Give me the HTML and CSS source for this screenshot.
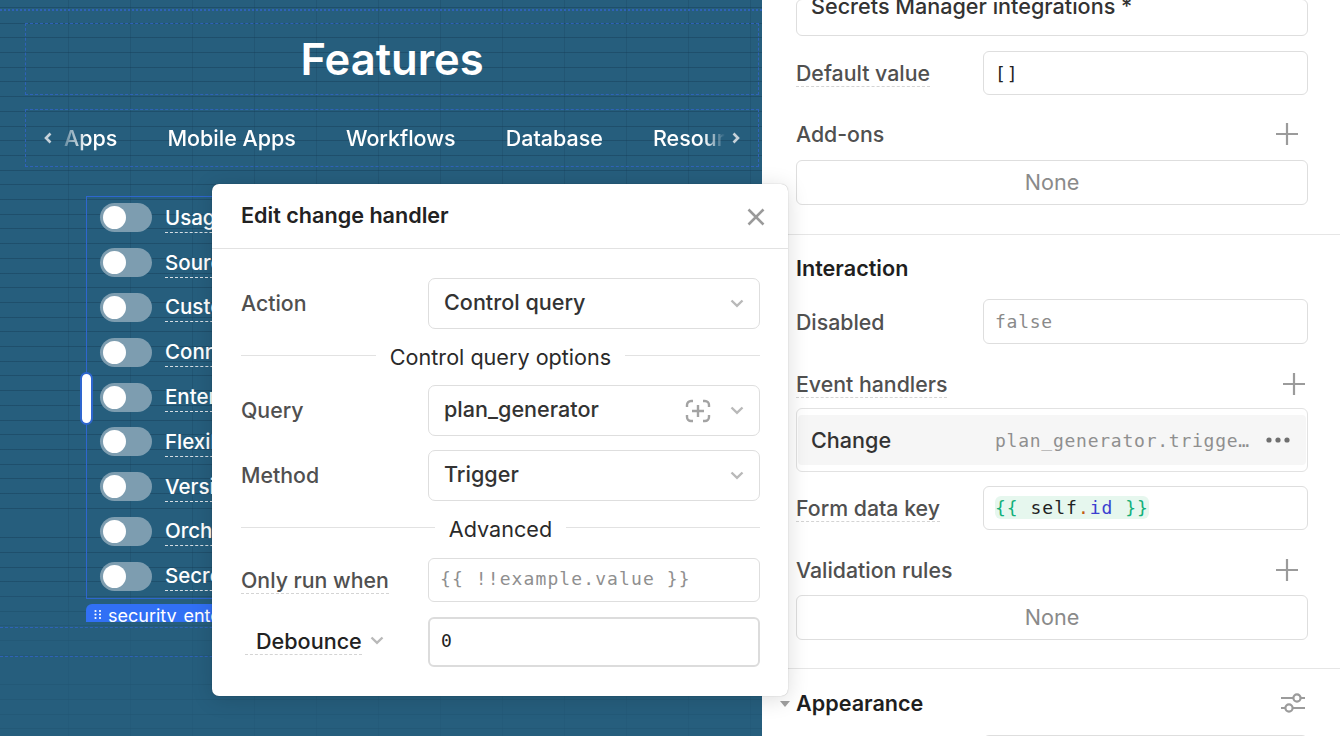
FILE: index.html
```html
<!DOCTYPE html>
<html lang="en">
<head>
<meta charset="utf-8">
<title>Edit change handler</title>
<link rel="stylesheet" href="styles.css">
</head>
<body>
<div class="app">
  <main class="canvas">
    <div class="grid-lines"></div>
    <div class="dash dash-top"></div>
    <div class="frame frame-title"><h1>Features</h1></div>
    <div class="frame frame-tabs">
      <svg class="chev" width="10" height="14" viewBox="0 0 10 14"><path d="M7.500 2.500 3 7l4.500 4.500" fill="none" stroke="#c6d2da" stroke-width="2.600"/></svg>
      <div class="tabs">
        <span>Apps</span><span>Mobile Apps</span><span>Workflows</span><span>Database</span><span>Resources</span>
      </div>
      <svg class="chev" width="10" height="14" viewBox="0 0 10 14"><path d="M2.500 2.500 7 7l-4.500 4.500" fill="none" stroke="#c6d2da" stroke-width="2.600"/></svg>
    </div>
    <div class="selection">
      <div class="toggle-row"><span class="toggle"></span><span class="tlabel">Usage analytics</span></div>
      <div class="toggle-row"><span class="toggle"></span><span class="tlabel">Source control</span></div>
      <div class="toggle-row"><span class="toggle"></span><span class="tlabel">Custom branding</span></div>
      <div class="toggle-row"><span class="toggle"></span><span class="tlabel">Connectors</span></div>
      <div class="toggle-row"><span class="toggle"></span><span class="tlabel">Enterprise support</span></div>
      <div class="toggle-row"><span class="toggle"></span><span class="tlabel">Flexible hosting</span></div>
      <div class="toggle-row"><span class="toggle"></span><span class="tlabel">Version history</span></div>
      <div class="toggle-row"><span class="toggle"></span><span class="tlabel">Orchestration</span></div>
      <div class="toggle-row"><span class="toggle"></span><span class="tlabel">Secrets Manager</span></div>
    </div>
    <div class="resize-handle"></div>
    <div class="tag">
      <svg width="10" height="11" viewBox="0 0 10 11" fill="#fff"><circle cx="2.500" cy="2" r="1.100"/><circle cx="7" cy="2" r="1.100"/><circle cx="2.500" cy="5.500" r="1.100"/><circle cx="7" cy="5.500" r="1.100"/><circle cx="2.500" cy="9" r="1.100"/><circle cx="7" cy="9" r="1.100"/></svg>
      <span>security_enterprise</span>
    </div>
    <div class="dash dash-b1"></div>
    <div class="dash dash-b2"></div>
  </main>

  <aside class="panel">
    <div class="section first">
      <div class="box box-clipped">Secrets Manager integrations *</div>
      <div class="row row-default"><span class="label dotted">Default value</span><div class="input mono dark">[]</div></div>
      <div class="row-head head-addons"><span class="label">Add-ons</span><svg class="plus" width="22" height="22" viewBox="0 0 22 22"><path d="M11 0v22M0 11h22" stroke="#9b9b9b" stroke-width="2.200"/></svg></div>
      <div class="box none">None</div>
    </div>
    <div class="section second">
      <h2>Interaction</h2>
      <div class="row row-disabled"><span class="label">Disabled</span><div class="input mono muted">false</div></div>
      <div class="row-head head-events"><span class="label dotted">Event handlers</span><svg class="plus plus-in" width="22" height="22" viewBox="0 0 22 22"><path d="M11 0v22M0 11h22" stroke="#9b9b9b" stroke-width="2.200"/></svg></div>
      <div class="handler">
        <div class="handler-inner">
          <span class="handler-name">Change</span>
          <span class="mono handler-code">plan_generator.trigge…</span>
          <svg width="24" height="6" viewBox="0 0 24 6" fill="#6f6f6f"><circle cx="3" cy="3" r="2.600"/><circle cx="12" cy="3" r="2.600"/><circle cx="21" cy="3" r="2.600"/></svg>
        </div>
      </div>
      <div class="row row-form"><span class="label dotted">Form data key</span><div class="input mono key-input"><span class="tpl"><i class="br">{{</i> self<i class="dot">.</i><i class="prop">id</i> <i class="br">}}</i></span></div></div>
      <div class="row-head head-valid"><span class="label">Validation rules</span><svg class="plus" width="22" height="22" viewBox="0 0 22 22"><path d="M11 0v22M0 11h22" stroke="#9b9b9b" stroke-width="2.200"/></svg></div>
      <div class="box none">None</div>
    </div>
    <div class="section third">
      <div class="appearance">
        <span class="tri"></span>
        <h2>Appearance</h2>
        <svg class="sliders" width="24" height="22" viewBox="0 0 24 22" fill="none" stroke="#9b9b9b" stroke-width="2.200"><path d="M0 6h12M20 6h4M0 16h4M12 16h12"/><circle cx="16" cy="6" r="3.600"/><circle cx="8" cy="16" r="3.600"/></svg>
      </div>
      <div class="row"><span></span><div class="input input-peek"></div></div>
    </div>
  </aside>

  <section class="modal">
    <header class="modal-head">
      <h3>Edit change handler</h3>
      <svg width="18" height="18" viewBox="0 0 18 18"><path d="M1.500 1.500l15 15M16.500 1.500l-15 15" stroke="#9a9a9a" stroke-width="2.600"/></svg>
    </header>
    <div class="modal-body">
      <div class="mrow r-action"><span class="label">Action</span>
        <div class="select"><span>Control query</span><svg class="caret" width="14" height="9" viewBox="0 0 14 9"><path d="M1.500 1.500 7 6.800l5.500-5.300" fill="none" stroke="#b9b9b9" stroke-width="2.400"/></svg></div>
      </div>
      <div class="divider d-options"><span>Control query options</span></div>
      <div class="mrow r-query"><span class="label">Query</span>
        <div class="select"><span>plan_generator</span>
          <svg class="fx" width="26" height="24" viewBox="0 0 26 24" fill="none" stroke="#a3a3a3" stroke-width="2.400"><path d="M2 8V6a4 4 0 0 1 4-4h2M18 2h2a4 4 0 0 1 4 4v2M24 16v2a4 4 0 0 1-4 4h-2M8 22H6a4 4 0 0 1-4-4v-2M13 6v12M7 12h12"/></svg>
          <svg class="caret" width="14" height="9" viewBox="0 0 14 9"><path d="M1.500 1.500 7 6.800l5.500-5.300" fill="none" stroke="#b9b9b9" stroke-width="2.400"/></svg></div>
      </div>
      <div class="mrow r-method"><span class="label">Method</span>
        <div class="select"><span>Trigger</span><svg class="caret" width="14" height="9" viewBox="0 0 14 9"><path d="M1.500 1.500 7 6.800l5.500-5.300" fill="none" stroke="#b9b9b9" stroke-width="2.400"/></svg></div>
      </div>
      <div class="divider d-advanced"><span>Advanced</span></div>
      <div class="mrow r-when"><span class="label dotted">Only run when</span>
        <div class="input mono placeholder">{{ !!example.value }}</div>
      </div>
      <div class="mrow r-debounce"><span class="debounce"><span>Debounce</span><svg width="14" height="9" viewBox="0 0 14 9"><path d="M1.500 1.500 7 6.800l5.500-5.300" fill="none" stroke="#b9b9b9" stroke-width="2.400"/></svg></span>
        <div class="input mono dark focus">0</div>
      </div>
    </div>
  </section>
</div>
</body>
</html>
```

FILE: styles.css
```css
* { box-sizing: border-box; }
html, body { margin: 0; height: 100%; overflow: hidden; }
body { font-family: Inter, "Liberation Sans", sans-serif; color: #1f1f1f; background: #fff; }
h1, h2, h3 { margin: 0; }
i { font-style: normal; }

.app { position: relative; display: flex; width: 1340px; height: 736px; overflow: hidden; }

/* canvas */
.canvas { position: relative; flex: 0 0 762px; height: 736px; background: #265e7d; overflow: hidden; }
.grid-lines {
  position: absolute; inset: 0;
  background-image:
    repeating-linear-gradient(180deg, transparent 0, transparent 13.7px, rgba(20,55,80,.38) 13.7px, rgba(20,55,80,.38) 14.7px),
    repeating-linear-gradient(90deg, transparent 0, transparent 61px, rgba(20,55,80,.2) 61px, rgba(20,55,80,.2) 62px);
  background-position: 0 9px, 7px 0;
  -webkit-mask-image: linear-gradient(180deg, #000 0, #000 78%, rgba(0,0,0,.3) 86%, rgba(0,0,0,.3) 100%);
}
.dash { position: absolute; left: 0; right: 0; border-top: 1px dashed #2f62b8; }
.dash-top { top: 9px; border-top-style: dotted; border-top-width: 2px; }
.dash-b1 { top: 627px; }
.dash-b2 { top: 656px; }
.frame { position: absolute; left: 25px; width: 734px; border: 1px dashed #2f62b8; }
.frame-title { top: 23px; height: 72px; display: flex; align-items: center; justify-content: center; }
.frame-title h1 { color: #fff; font-size: 43.500px; font-weight: 600; line-height: 1; padding-top: 2px; }
.frame-tabs { top: 109px; height: 58px; display: flex; align-items: center; padding-left: 17px; color: #fff; }
.chev { flex: none; }
.tabs {
  display: flex; gap: 50px; flex: 0 0 661px; margin: 0 6px 0 11px; overflow: hidden; white-space: nowrap;
  font-size: 21.500px; font-weight: 500; line-height: 1.200; padding-top: 2px;
  -webkit-mask-image: linear-gradient(90deg, rgba(255,255,255,.3) 0, #fff 24px, #fff 640px, rgba(255,255,255,0) 661px);
}
.selection { position: absolute; left: 86px; top: 196px; width: 300px; height: 403px; border: 1px solid #2e66cf; padding-left: 13px; display: flex; flex-direction: column; }
.toggle-row { flex: 0 0 44.800px; display: flex; align-items: center; gap: 13px; padding-bottom: 3px; }
.toggle { position: relative; flex: 0 0 52px; height: 29px; border-radius: 15px; background: #7d9db0; }
.toggle::after { content: ""; position: absolute; left: 3px; top: 3px; width: 23px; height: 23px; border-radius: 50%; background: #fff; }
.tlabel { color: #fff; font-size: 20.500px; font-weight: 500; white-space: nowrap; border-bottom: 1px dashed #d5dde3; line-height: 26px; padding: 2px 0 1px; }
.resize-handle { position: absolute; left: 80px; top: 372px; width: 13px; height: 53px; border-radius: 7px; background: #fff; border: 2px solid #2e66cf; }
.tag { position: absolute; left: 86px; top: 604px; width: 200px; height: 18px; background: #3170f5; border-radius: 6px 6px 0 0; color: #fff; font-size: 18px; line-height: 23px; padding-left: 7px; display: flex; gap: 5px; overflow: hidden; white-space: nowrap; }
.tag svg { flex: none; margin-top: 5px; }

/* panel */
.panel { flex: 1; padding-left: 34px; padding-right: 32px; background: #fff; }
.section { position: relative; }
.section::after { content: ""; position: absolute; left: -34px; right: -32px; bottom: 0; border-bottom: 1px solid #e6e6e6; }
.third::after { display: none; }
.first { height: 236px; }
.second { height: 434px; }
.label { font-size: 21.300px; line-height: 26px; color: #505050; font-weight: 500; white-space: nowrap; }
.dotted { display: inline-block; justify-self: start; border-bottom: 1px dashed #d4d4d4; }
.panel .dotted { padding-top: 1px; }
.mrow .label { padding-bottom: 1px; }
.mrow .dotted { padding-bottom: 0; }
.box { border: 1px solid #dedede; border-radius: 6px; font-size: 21.600px; font-weight: 500; }
.box-clipped { height: 37px; margin-top: -1px; padding: 0 14px; line-height: 13px; color: #333; overflow: hidden; }
.none { height: 45px; display: flex; align-items: center; justify-content: center; color: #8a8a8a; font-weight: 400; padding-bottom: 2px; }
.row { display: grid; grid-template-columns: 187px 1fr; align-items: center; }
.row-head { display: flex; justify-content: space-between; align-items: center; }
.plus { margin-right: 10px; }
.plus-in { margin-right: 3px; }
.input { display: flex; align-items: center; height: 44px; border: 1px solid #dedede; border-radius: 6px; padding: 0 11px; background: #fff; }
.key-input { padding-bottom: 2px; }
.mono { font-family: "DejaVu Sans Mono", "Liberation Mono", monospace; font-size: 18px; letter-spacing: 1px; }
.dark { color: #222; }
.muted { color: #8a8a8a; }
.row-default { margin-top: 15px; }
.head-addons { margin-top: 26px; height: 26px; }
.head-addons + .none { margin-top: 13px; }
.second h2, .appearance h2 { font-size: 21.600px; font-weight: 600; line-height: 26px; color: #1f1f1f; }
.second h2 { padding-top: 20px; box-sizing: content-box; }
.row-disabled { margin-top: 18px; height: 45px; }
.row-disabled .input { height: 45px; letter-spacing: .75px; }
.head-events { margin-top: 27px; height: 26px; }
.handler { margin-top: 11px; height: 64px; border: 1px solid #e2e2e2; border-radius: 6px; }
.handler-inner { display: flex; align-items: center; margin: 6px 1px; height: 50px; background: #f6f6f6; border-radius: 4px; padding: 0 16px 0 13px; }
.handler-name { font-size: 21.600px; font-weight: 500; color: #333; flex: 0 0 184px; }
.handler-code { color: #8f8f8f; flex: 1; white-space: nowrap; letter-spacing: .75px; }
.row-form { margin-top: 14px; }
.tpl { background: #e6f7ee; border-radius: 6px; color: #222; padding: 1px 0; }
.br { color: #12b07a; }
.dot { color: #c25a12; }
.prop { color: #3b3fd0; }
.head-valid { margin-top: 27px; height: 26px; }
.head-valid + .none { margin-top: 12px; }
.third { padding-top: 21px; }
.appearance { position: relative; display: flex; justify-content: space-between; align-items: center; height: 26px; }
.tri { position: absolute; left: -16px; top: 11px; border-style: solid; border-width: 6px 5px 0; border-color: #a0a0a0 transparent transparent; }
.sliders { margin-right: 3px; }
.third .row { margin-top: 19px; }

/* modal */
.modal { position: absolute; left: 212px; top: 184px; width: 576px; height: 512px; background: #fff; border-radius: 7px; box-shadow: 0 0 1px rgba(0,0,0,.35), 0 3px 22px rgba(0,0,0,.14); }
.modal-head { display: flex; align-items: center; justify-content: space-between; height: 65px; padding: 0 23px 0 29px; border-bottom: 1px solid #e2e2e2; }
.modal-head h3 { font-size: 21.600px; font-weight: 600; color: #222; padding-bottom: 3px; }
.modal-head svg { margin-top: 2px; }
.modal-body { padding: 29px 28px 0 29px; }
.mrow { display: grid; grid-template-columns: 187px 1fr; align-items: center; }
.select { display: flex; align-items: center; height: 51px; border: 1px solid #dedede; border-radius: 7px; padding: 0 15px; font-size: 21.600px; font-weight: 500; color: #333; }
.select span { flex: 1; padding-bottom: 3px; }
.caret { flex: none; }
.fx { flex: none; margin-right: 19px; }
.divider { position: relative; display: flex; align-items: center; justify-content: center; gap: 14px; font-size: 21.600px; color: #2a2a2a; height: 26px; padding-bottom: 1px; }
.divider::before, .divider::after { content: ""; flex: 1; border-top: 1px solid #e2e2e2; margin-top: -3px; }
.d-options { margin-top: 15px; }
.r-query { margin-top: 15px; }
.r-method { margin-top: 14px; }
.d-advanced { margin-top: 15px; }
.r-when { margin-top: 16px; }
.placeholder { color: #8f8f8f; padding-bottom: 4px; letter-spacing: 1.100px; }
.r-debounce { margin-top: 15px; }
.debounce { display: flex; align-items: center; gap: 8px; font-size: 21.600px; font-weight: 500; color: #222; padding-left: 15px; padding-bottom: 2px; }
.debounce span { border-bottom: 1px dashed #d4d4d4; margin-left: -11px; padding-left: 11px; line-height: 26px; }
.debounce svg { margin-top: -2px; }
.focus { height: 50px; border: 2px solid #dcdcdc; padding-bottom: 4px; }
```
